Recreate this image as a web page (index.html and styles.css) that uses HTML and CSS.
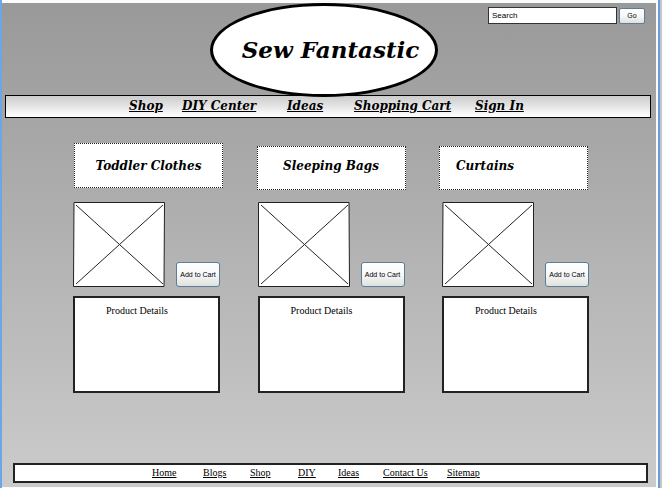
FILE: index.html
```
<!DOCTYPE html>
<html lang="en">
<head>
<meta charset="utf-8">
<title>Sew Fantastic</title>
<link rel="stylesheet" href="styles.css">
</head>
<body>
<div class="window">
<div class="page">
  <header class="header">
    <h1 class="logo">Sew Fantastic</h1>
    <form class="search">
      <input class="search-box" type="text" value="Search" aria-label="Search">
      <button class="button go" type="button">Go</button>
    </form>
  </header>
  <nav class="main-nav" aria-label="Main">
    <a href="#">Shop</a>
    <a href="#">DIY Center</a>
    <a href="#">Ideas</a>
    <a href="#">Shopping Cart</a>
    <a href="#">Sign In</a>
  </nav>
  <main class="content">
    <div class="categories">
      <h2 class="category category-raised">Toddler Clothes</h2>
      <h2 class="category">Sleeping Bags</h2>
      <h2 class="category category-start">Curtains</h2>
    </div>
    <div class="products">
      <article class="product">
        <div class="product-top">
          <svg class="picture" viewBox="0 0 92 85" role="img" aria-label="Product picture"><path class="frame" d="M1 .5H91.5L91 84.5H.5Z"/><path d="M3 3L90 82M90 3L3 82"/></svg>
          <button class="button add" type="button">Add to Cart</button>
        </div>
        <p class="details">Product Details</p>
      </article>
      <article class="product">
        <div class="product-top">
          <svg class="picture" viewBox="0 0 92 85" role="img" aria-label="Product picture"><path class="frame" d="M.5 .5H91L91.5 84.5H.5Z"/><path d="M3 3L90 82M90 3L3 82"/></svg>
          <button class="button add" type="button">Add to Cart</button>
        </div>
        <p class="details">Product Details</p>
      </article>
      <article class="product">
        <div class="product-top">
          <svg class="picture" viewBox="0 0 92 85" role="img" aria-label="Product picture"><path class="frame" d="M1 .5H91.5V84.5H.5Z"/><path d="M3 3L90 82M90 3L3 82"/></svg>
          <button class="button add" type="button">Add to Cart</button>
        </div>
        <p class="details">Product Details</p>
      </article>
    </div>
  </main>
  <footer class="footer">
    <a href="#">Home</a>
    <a href="#">Blogs</a>
    <a href="#">Shop</a>
    <a href="#">DIY</a>
    <a href="#">Ideas</a>
    <a href="#">Contact Us</a>
    <a href="#">Sitemap</a>
  </footer>
</div>
</div>
</body>
</html>
```
FILE: styles.css
```
* { box-sizing: border-box; }

body {
  margin: 0;
  background: #c4c6ca;
  color: #000;
  font-family: "Liberation Serif", serif;
  font-size: 10px;
}

a { color: inherit; text-underline-offset: 1px; }

.window {
  display: flex;
  min-height: 100vh;
  margin-right: 2px;
  border-left: 2px solid #6ca5e8;
  border-right: 2px solid #6d9bd6;
  background: #fafbfb;
}

.page {
  display: flex;
  flex-direction: column;
  flex: 1;
  margin: 3px 2px 1px 0;
  padding-bottom: 4px;
  background: linear-gradient(#999, #cbcbcb);
}

.header {
  display: grid;
  grid-template-columns: 1fr 228px 1fr;
  padding-right: 11px;
}

.logo {
  grid-column: 2;
  position: relative;
  z-index: 1;
  display: flex;
  align-items: center;
  justify-content: center;
  height: 94px;
  margin: 0 0 -2px;
  padding-left: 14px;
  border: 3px solid #000;
  border-radius: 50%;
  background: #fff;
  font: italic bold 23px/26px "DejaVu Serif", serif;
  white-space: nowrap;
}

.search {
  display: flex;
  justify-content: flex-end;
  align-items: flex-start;
  gap: 2px;
  padding-top: 4px;
}

.search-box {
  width: 129px;
  height: 17px;
  padding: 0 3px;
  border: 1px solid #333;
  background: #fff;
  color: #000;
  font: 8px/12px "Liberation Sans", sans-serif;
}

.button {
  padding: 0;
  border: 1px solid #5b7d99;
  border-radius: 2px;
  background: linear-gradient(#fff, #f7f8f8 50%, #dfe1dc);
  color: #000;
  font: 7px/10px "Liberation Sans", sans-serif;
  white-space: nowrap;
}

.go { width: 26px; height: 16px; margin-top: 1px; }

.main-nav {
  display: grid;
  grid-template-columns: 53px 105px 67px 121px auto;
  justify-content: start;
  height: 23px;
  margin: 0 5px 0 3px;
  padding: 3px 0 0 123px;
  border: 1px solid #000;
  background: linear-gradient(#ccc, #fff);
  font: italic bold 12px/14px "DejaVu Serif", serif;
  white-space: nowrap;
}

.content { padding: 25px 67px 0 71px; }

.categories {
  display: flex;
  justify-content: space-between;
  align-items: flex-end;
  padding: 0 1px;
}

.category {
  display: flex;
  align-items: center;
  justify-content: center;
  width: 149px;
  height: 44px;
  margin: 0;
  padding-bottom: 4px;
  border: 1px dotted #222;
  background: #fff;
  font: italic bold 12px/14px "DejaVu Serif", serif;
}

.category-raised { height: 45px; margin-bottom: 2px; padding-bottom: 0; }
.category-start { justify-content: flex-start; padding-left: 16px; }

.products {
  display: flex;
  justify-content: space-between;
  margin-top: 12px;
}

.product { width: 147px; }

.product-top {
  display: flex;
  justify-content: space-between;
  align-items: flex-end;
}

.picture {
  width: 92px;
  height: 85px;
  fill: none;
  stroke: #222;
  stroke-width: 1;
}

.frame { fill: #fff; }

.add { width: 44px; height: 25px; border-radius: 3px; }

.details {
  height: 97px;
  margin: 9px 0 0;
  padding: 7px 0 0 31px;
  border: 2px solid #222;
  background: #fff;
  line-height: 12px;
}

.footer {
  display: grid;
  grid-template-columns: 51px 47px 48px 40px 45px 64px auto;
  justify-content: start;
  margin: auto 8px 0 11px;
  padding: 2px 0 2px 137px;
  border: 2px solid #222;
  background: #fff;
  line-height: 12px;
  white-space: nowrap;
}
```
